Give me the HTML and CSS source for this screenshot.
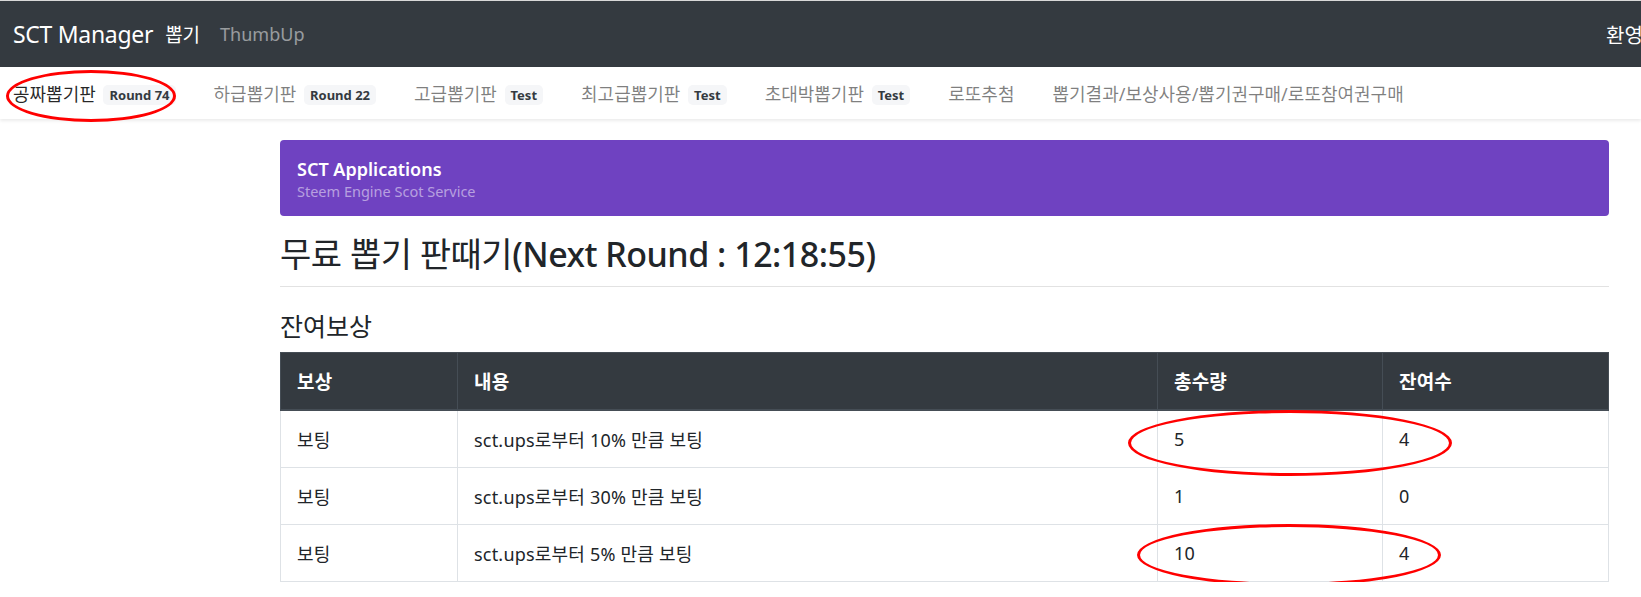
FILE: index.html
```html
<!DOCTYPE html>
<html lang="ko">
<head>
  <meta charset="UTF-8">
  <meta name="viewport" content="width=device-width, initial-scale=1.0">
  <title>SCT Manager 뽑기</title>
  <link rel="stylesheet" href="styles.css">
</head>
<body>
  <nav class="topbar">
    <span class="brand">SCT Manager</span>
    <span class="top-link active">뽑기</span>
    <span class="top-link">ThumbUp</span>
    <span class="welcome">환영합니다 님</span>
  </nav>

  <div class="subnav">
    <span class="sub-link active">공짜뽑기판 <span class="badge">Round 74</span></span>
    <span class="sub-link">하급뽑기판 <span class="badge">Round 22</span></span>
    <span class="sub-link">고급뽑기판 <span class="badge">Test</span></span>
    <span class="sub-link">최고급뽑기판 <span class="badge">Test</span></span>
    <span class="sub-link">초대박뽑기판 <span class="badge">Test</span></span>
    <span class="sub-link">로또추첨</span>
    <span class="sub-link">뽑기결과/보상사용/뽑기권구매/로또참여권구매</span>
    <span class="mark mark-nav"></span>
  </div>

  <div class="container">
    <div class="app-box">
      <div class="app-title">SCT Applications</div>
      <div class="app-sub">Steem Engine Scot Service</div>
    </div>

    <h1 class="page-title">무료 뽑기 판때기<span class="latin">(Next Round : 12:18:55)</span></h1>
    <hr class="rule">

    <h4 class="section-title">잔여보상</h4>

    <div class="table-wrap">
      <table class="reward-table">
        <thead>
          <tr>
            <th class="c1">보상</th>
            <th class="c2">내용</th>
            <th class="c3">총수량</th>
            <th class="c4">잔여수</th>
          </tr>
        </thead>
        <tbody>
          <tr>
            <td>보팅</td>
            <td>sct.ups로부터 10% 만큼 보팅</td>
            <td>5</td>
            <td>4</td>
          </tr>
          <tr>
            <td>보팅</td>
            <td>sct.ups로부터 30% 만큼 보팅</td>
            <td>1</td>
            <td>0</td>
          </tr>
          <tr>
            <td>보팅</td>
            <td>sct.ups로부터 5% 만큼 보팅</td>
            <td>10</td>
            <td>4</td>
          </tr>
        </tbody>
      </table>
      <span class="mark mark-row1"></span>
      <span class="mark mark-row3"></span>
    </div>
  </div>
</body>
</html>
```

FILE: styles.css
```css
html, body {
  margin: 0;
  padding: 0;
  overflow: hidden;
  background: #fff;
  font-family: 'Noto Sans', 'Noto Sans CJK KR', sans-serif;
  color: #212529;
}

.topbar {
  display: flex;
  align-items: center;
  height: 66px;
  border-top: 1px solid #d8d8d8;
  background: #343a40;
  padding-left: 13px;
  overflow: hidden;
  white-space: nowrap;
}

.brand {
  font-size: 23px;
  color: #fff;
  margin-right: 2px;
  letter-spacing: -0.3px;
}

.top-link {
  font-size: 18px;
  color: rgba(255, 255, 255, 0.5);
  margin-left: 10px;
  margin-right: 10px;
}

.top-link.active {
  color: #fff;
  font-size: 19px;
}

/* 오른쪽 인사말은 화면 밖으로 잘림 */
.welcome {
  margin-left: auto;
  flex: 0 0 35px;
  min-width: 0;
  font-size: 20px;
  color: #fff;
}

.subnav {
  position: relative;
  display: flex;
  align-items: center;
  gap: 38px;
  height: 52px;
  padding-left: 13px;
  background: #fff;
  box-shadow: 0 2px 3px rgba(0, 0, 0, 0.08);
  white-space: nowrap;
}

.sub-link {
  font-size: 18px;
  color: rgba(0, 0, 0, 0.5);
  letter-spacing: 0;
}

.sub-link.active {
  color: rgba(0, 0, 0, 0.85);
}

.badge {
  display: inline-block;
  margin-left: 3px;
  padding: 1px 6px;
  border-radius: 5px;
  background: #f5f6f8;
  color: #343a40;
  font-size: 13px;
  font-weight: 700;
  letter-spacing: 0;
  vertical-align: 1px;
}

.container {
  margin: 21px 32px 0 280px;
}

.app-box {
  background: #6f42c1;
  border-radius: 4px;
  padding: 17px 17px 14px;
}

.app-title {
  color: #fff;
  font-size: 18px;
  font-weight: 600;
  line-height: 24px;
}

.app-sub {
  color: rgba(255, 255, 255, 0.5);
  font-size: 14.5px;
  line-height: 21px;
}

.page-title {
  margin: 14px 0 0;
  font-size: 34px;
  font-weight: 400;
  line-height: 48px;
  letter-spacing: -0.5px;
}

.page-title .latin {
  font-weight: 500;
}

.rule {
  margin: 8px 0 0;
  border: 0;
  border-top: 1px solid #e2e2e2;
}

.section-title {
  margin: 22px 0 0;
  font-size: 25px;
  font-weight: 400;
  line-height: 34px;
}

.table-wrap {
  position: relative;
  margin-top: 9px;
}

.reward-table {
  width: 100%;
  border-collapse: collapse;
  font-size: 18px;
  letter-spacing: 0.2px;
}

.reward-table th,
.reward-table td {
  text-align: left;
  padding: 0 16px;
  border: 1px solid #dee2e6;
}

.reward-table th {
  height: 56px;
  background: #343a40;
  color: #fff;
  font-size: 19px;
  font-weight: 700;
  border-color: #454d55;
  border-bottom-width: 2px;
}

.reward-table td {
  height: 56px;
}

.c1 { width: 144px; }
.c2 { width: 667px; }
.c3 { width: 192px; }

/* 빨간 동그라미 표시 */
.mark {
  position: absolute;
  border: 3px solid #f00;
  border-radius: 50%;
  pointer-events: none;
}

.mark-nav {
  left: 6px;
  top: 3px;
  width: 164px;
  height: 46px;
}

.mark-row1 {
  left: 848px;
  top: 58px;
  width: 318px;
  height: 60px;
}

.mark-row3 {
  left: 857px;
  top: 172px;
  width: 298px;
  height: 56px;
}
```
